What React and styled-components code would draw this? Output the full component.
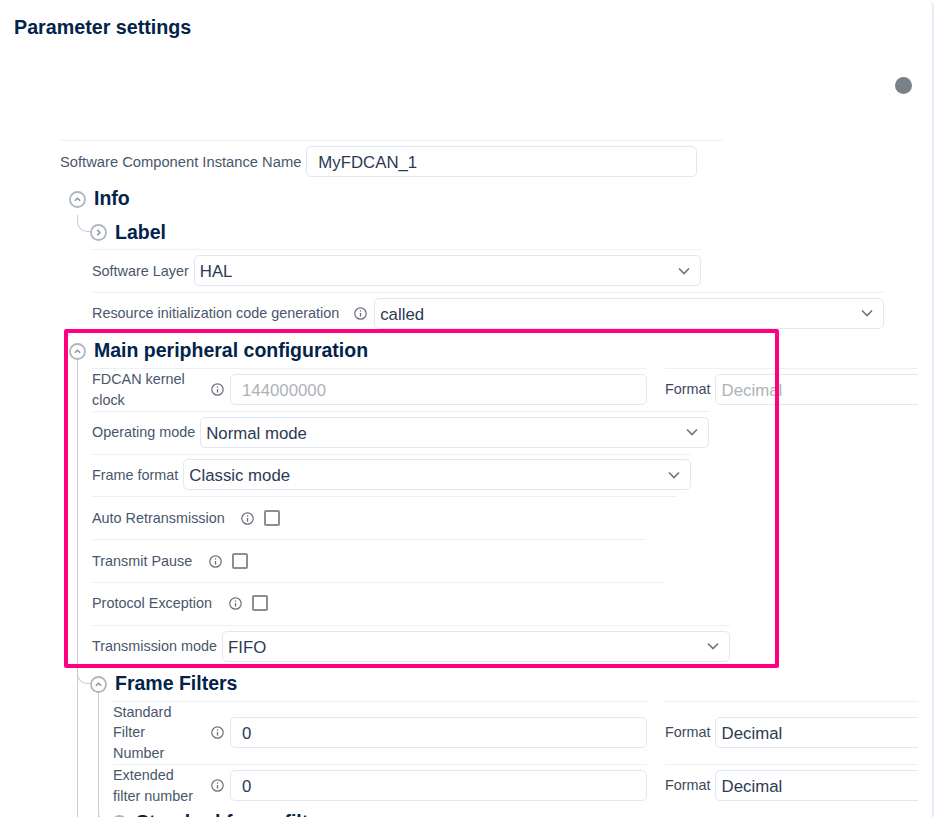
import React from "react";
import styled, { createGlobalStyle } from "styled-components";

const Global = createGlobalStyle`
  html, body { margin: 0; padding: 0; background: #fff; }
  body { font-family: "Liberation Sans", Arial, sans-serif; color: #03234b; }
`;

const Page = styled.div`
  width: 936px;
  height: 817px;
  overflow: hidden;
`;

const Panel = styled.main`
  position: relative;
  width: 934px;
  height: 817px;
  box-sizing: border-box;
  overflow: hidden;
  border-right: 2px solid #e8ebf7;
  border-top-right-radius: 6px;
`;

const Title = styled.h1`
  margin: 0;
  padding: 16px 0 0 14px;
  font-size: 19.7px;
  line-height: 22px;
  font-weight: 700;
  color: #03234b;
`;

const StatusRow = styled.div`
  display: flex;
  justify-content: flex-end;
  padding: 39px 20px 0 0;
`;

const StatusDot = styled.span`
  width: 17px;
  height: 17px;
  border-radius: 50%;
  background: #798088;
`;

const Tree = styled.div`
  margin: 46px 0 0 60px;
`;

const Row = styled.div`
  display: flex;
  align-items: center;
  gap: ${(p) => p.$gap ?? 5}px;
  box-sizing: border-box;
  width: ${(p) => p.$width}px;
  min-height: 42.8px;
  border-top: 1px solid #eef0f8;
`;

const FieldPair = styled.div`
  display: flex;
  gap: 18px;
`;

const FormatRow = styled(Row)`
  overflow: hidden;
  flex: none;
`;

const Label = styled.label`
  flex: none;
  width: ${(p) => (p.$width ? `${p.$width}px` : "auto")};
  margin-right: ${(p) => p.$after ?? 0}px;
  font-size: ${(p) => p.$size ?? 14.4}px;
  line-height: 20.8px;
  color: #49566b;
`;

const FormatLabel = styled(Label)`
  color: #3d4a5e;
`;

const boxStyles = `
  box-sizing: border-box;
  flex: none;
  height: 31px;
  margin-bottom: 1px;
  border: 1px solid #e3e7f5;
  border-radius: 5px;
  background: #fff;
  font-family: "Liberation Sans", Arial, sans-serif;
  font-size: 16.8px;
`;

const TextField = styled.input`
  ${boxStyles}
  width: ${(p) => p.$width}px;
  padding: 3px ${(p) => p.$pad ?? 11}px 0;
  color: ${(p) => (p.disabled ? "#aeb2b9" : "#2b3a52")};
  -webkit-text-fill-color: ${(p) => (p.disabled ? "#aeb2b9" : "#2b3a52")};
  outline: none;
  opacity: 1;
`;

const Select = styled.div`
  ${boxStyles}
  flex: 1;
  display: flex;
  align-items: center;
  justify-content: space-between;
  padding: 0 10px 0 5px;
  color: #2b3a52;
`;

const SelectValue = styled.span`
  padding-top: 3px;
`;

const ChevronSvg = styled.svg`
  width: 12px;
  height: 8px;
  fill: none;
  stroke: #6f7680;
  stroke-width: 1.7;
`;

const Chevron = () => (
  <ChevronSvg viewBox="0 0 12 8">
    <path d="M1 1.5 L6 6.5 L11 1.5" />
  </ChevronSvg>
);

const InfoSvg = styled.svg`
  flex: none;
  width: 13px;
  height: 13px;
  margin: ${(p) => p.$margin ?? "0 2px"};
  fill: none;
  stroke: #6b7078;
`;

const InfoIcon = ({ margin }) => (
  <InfoSvg viewBox="0 0 13 13" $margin={margin}>
    <circle cx="6.5" cy="6.5" r="5.7" strokeWidth="1.2" />
    <path d="M6.5 6 V9.6" strokeWidth="1.3" />
    <path d="M6.5 3.4 V4.7" strokeWidth="1.3" />
  </InfoSvg>
);

const Box = styled.span`
  flex: none;
  box-sizing: border-box;
  width: 16px;
  height: 16px;
  margin-bottom: 1px;
  border: 2px solid #8a8f96;
  border-radius: 2px;
  background: #fff;
`;

const HeadingRow = styled.div`
  position: relative;
  display: flex;
  align-items: center;
  gap: 8px;
  height: ${(p) => p.$height ?? 33.2}px;
  margin-left: ${(p) => p.$left}px;

  ${(p) =>
    p.$sub &&
    `&::before {
      content: "";
      position: absolute;
      left: -13px;
      top: -1px;
      width: 13px;
      height: 17px;
      box-sizing: border-box;
      border-left: 1px solid #c9ccda;
      border-bottom: 1px solid #c9ccda;
      border-bottom-left-radius: 10px;
    }`}
`;

const HeadingText = styled.h2`
  margin: 0 0 2px;
  font-size: 19.5px;
  line-height: 24px;
  font-weight: 700;
  color: #03234b;
  white-space: nowrap;
`;

const ToggleSvg = styled.svg`
  flex: none;
  width: 17px;
  height: 17px;
  fill: #fff;
  stroke: #b0b6bd;
`;

const Toggle = ({ dir = "up" }) => (
  <ToggleSvg viewBox="0 0 17 17">
    <circle cx="8.5" cy="8.5" r="7.5" strokeWidth="1.8" />
    <path
      fill="none"
      stroke="#8b939c"
      strokeWidth="1.5"
      d={dir === "up" ? "M5.8 9.8 L8.5 7.2 L11.2 9.8" : "M7.3 5.8 L9.9 8.5 L7.3 11.2"}
    />
  </ToggleSvg>
);

const Body = styled.div`
  position: relative;
  margin-left: ${(p) => p.$left}px;

  ${(p) =>
    p.$line &&
    `&::before {
      content: "";
      position: absolute;
      left: -15px;
      top: -8px;
      bottom: 0;
      width: 1px;
      background: #c9ccda;
    }`}
`;

const Frame = styled.div`
  position: absolute;
  left: 64px;
  top: 329px;
  width: 715px;
  height: 339px;
  box-sizing: border-box;
  border: 4px solid #ff0080;
  border-radius: 2px;
  pointer-events: none;
`;

const NumberRow = ({ width, label, labelWidth, after, value, disabled, format }) => (
  <FieldPair>
    <Row $width={width} $gap={0}>
      <Label $width={labelWidth} $after={after}>
        {label}
      </Label>
      <InfoIcon margin="0 6px 0 1px" />
      <TextField readOnly disabled={disabled} value={value} $width={417} />
    </Row>
    <FormatRow $width={253} $gap={4}>
      <FormatLabel>Format</FormatLabel>
      <TextField readOnly disabled={disabled} value={format} $width={300} $pad={6} />
    </FormatRow>
  </FieldPair>
);

const SelectRow = ({ width, label, value, info }) => (
  <Row $width={width} $gap={5}>
    <Label>{label}</Label>
    {info && <InfoIcon margin="0 2px 0 10px" />}
    <Select>
      <SelectValue>{value}</SelectValue>
      <Chevron />
    </Select>
  </Row>
);

const CheckRow = ({ width, label }) => (
  <Row $width={width} $gap={0}>
    <Label>{label}</Label>
    <InfoIcon margin="0 10px 0 16.5px" />
    <Box />
  </Row>
);

export default function App() {
  return (
    <Page>
      <Global />
      <Panel>
        <Title>Parameter settings</Title>
        <StatusRow>
          <StatusDot />
        </StatusRow>
        <Tree>
          <Row $width={663} $gap={5}>
            <Label $size={14.73}>Software Component Instance Name</Label>
            <TextField readOnly value="MyFDCAN_1" $width={391} />
          </Row>

          <HeadingRow $left={9}>
            <Toggle />
            <HeadingText>Info</HeadingText>
          </HeadingRow>
          <Body $left={32}>
            <HeadingRow $left={-2} $sub>
              <Toggle dir="right" />
              <HeadingText>Label</HeadingText>
            </HeadingRow>
            <SelectRow width={609} label="Software Layer" value="HAL" />
            <SelectRow
              width={792}
              label="Resource initialization code generation"
              value="called"
              info
            />
          </Body>

          <HeadingRow $left={9}>
            <Toggle />
            <HeadingText>Main peripheral configuration</HeadingText>
          </HeadingRow>
          <Body $left={32} $line>
            <NumberRow
              width={555}
              label="FDCAN kernel clock"
              labelWidth={100}
              after={18}
              value="144000000"
              format="Decimal"
              disabled
            />
            <SelectRow width={617} label="Operating mode" value="Normal mode" />
            <SelectRow width={599} label="Frame format" value="Classic mode" />
            <CheckRow width={585} label="Auto Retransmission" />
            <CheckRow width={553} label="Transmit Pause" />
            <CheckRow width={573} label="Protocol Exception" />
            <SelectRow width={638} label="Transmission mode" value="FIFO" />

            <HeadingRow $left={-2} $sub $height={33}>
              <Toggle />
              <HeadingText>Frame Filters</HeadingText>
            </HeadingRow>
            <Body $left={21} $line>
              <NumberRow
                width={534}
                label="Standard Filter Number"
                labelWidth={80}
                after={17}
                value="0"
                format="Decimal"
              />
              <NumberRow
                width={534}
                label="Extended filter number"
                labelWidth={85}
                after={12}
                value="0"
                format="Decimal"
              />
              <HeadingRow $left={-2} $sub>
                <Toggle />
                <HeadingText>Standard frame filters</HeadingText>
              </HeadingRow>
            </Body>
          </Body>
        </Tree>
        <Frame />
      </Panel>
    </Page>
  );
}
